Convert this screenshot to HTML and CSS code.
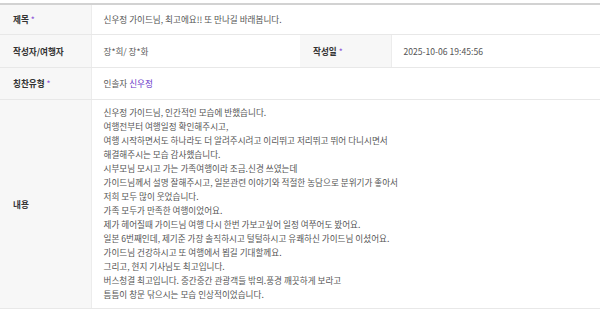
FILE: index.html
```html
<!DOCTYPE html>
<html>
<head>
    <meta charset="utf-8">
    <title>칭찬합시다</title>
    <link rel="stylesheet" href="styles.css">
</head>
<body>
    <table class="view-table">
        <colgroup>
            <col class="col-label">
            <col class="col-value">
            <col class="col-label">
            <col>
        </colgroup>
        <tr class="row-title">
            <th>제목 <span class="req">*</span></th>
            <td colspan="3">신우정 가이드님, 최고에요!! 또 만나길 바래봅니다.</td>
        </tr>
        <tr class="row-writer">
            <th>작성자/여행자</th>
            <td>장*희/ 장*화</td>
            <th>작성일 <span class="req">*</span></th>
            <td>2025-10-06 19:45:56</td>
        </tr>
        <tr class="row-type">
            <th>칭찬유형 <span class="req">*</span></th>
            <td colspan="3">인솔자 <span class="guide">신우정</span></td>
        </tr>
        <tr class="row-content">
            <th>내용</th>
            <td colspan="3">
                <div class="content">
                    신우정 가이드님, 인간적인 모습에 반했습니다.<br>
                    여행전부터 여행일정 확인해주시고,<br>
                    여행 시작하면서도 하나라도 더 알려주시려고 이리뛰고 저리뛰고 뛰어 다니시면서<br>
                    해결해주시는 모습 감사했습니다.<br>
                    시부모님 모시고 가는 가족여행이라 조금.신경 쓰였는데<br>
                    가이드님께서 설명 잘해주시고, 일본관련 이야기와 적절한 농담으로 분위기가 좋아서<br>
                    저희 모두 많이 웃었습니다.<br>
                    가족 모두가 만족한 여행이었어요.<br>
                    제가 헤어질때 가이드님 여행 다시 한번 가보고싶어 일정 여쭈어도 봤어요.<br>
                    일본 6번째인데, 제기준 가장 솔직하시고 털털하시고 유쾌하신 가이드님 이셨어요.<br>
                    가이드님 건강하시고 또 여행에서 뵙길 기대할께요.<br>
                    그리고, 현지 기사님도 최고입니다.<br>
                    버스청결 최고입니다. 중간중간 관광객들 밖의.풍경 깨끗하게 보라고<br>
                    틈틈이 창문 닦으시는 모습 인상적이었습니다.
                </div>
            </td>
        </tr>
    </table>
</body>
</html>
```

FILE: styles.css
```css
body {
    margin: 0;
    padding-top: 3px;
    background: #fff;
    font-family: "Noto Sans CJK KR", "Noto Sans", sans-serif;
    font-size: 8.6px;
    color: #555;
}
.view-table {
    width: 600px;
    border-collapse: collapse;
    table-layout: fixed;
    border-top: 2px solid #d2d2d2;
    border-bottom: 1px solid #e2e2e2;
}
.col-label {
    width: 91px;
}
.col-value {
    width: 209px;
}
.view-table th,
.view-table td {
    border-bottom: 1px solid #e8e8e8;
    text-align: left;
    vertical-align: middle;
    line-height: 14px;
}
.view-table th {
    background: #f7f7f7;
    color: #333;
    font-weight: bold;
    padding: 0 0 0 13px;
    border-right: 1px solid #ececec;
}
.view-table td {
    padding: 0 12px;
}
.row-title { height: 30px; }
.row-writer { height: 33px; }
.row-type { height: 32px; }
.row-content td {
    padding-top: 5px;
    padding-bottom: 7px;
}
.req {
    color: #8a4fd8;
    font-weight: normal;
}
.guide {
    color: #6a35c9;
}
.content {
    line-height: 14px;
}
```
